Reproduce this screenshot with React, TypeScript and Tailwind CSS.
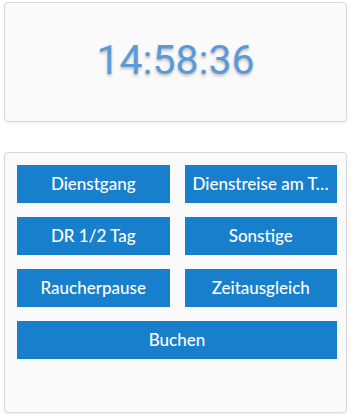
const actions = [
  'Dienstgang',
  'Dienstreise am Tag',
  'DR 1/2 Tag',
  'Sonstige',
  'Raucherpause',
  'Zeitausgleich',
]

function ActionButton({ label, wide }: { label: string; wide?: boolean }) {
  return (
    <button
      className={`h-[38px] min-w-0 bg-[#187fcc] px-[8px] text-[17px] font-medium text-white truncate ${wide ? 'col-span-2' : ''}`}
      style={{ fontFamily: 'Lato, "Open Sans", sans-serif' }}
    >
      {label}
    </button>
  )
}

export default function App() {
  return (
    <div className="w-[352px] h-[415px] bg-white pt-[2px] pl-[4px] pr-[5px]">
      {/* Uhr */}
      <div className="h-[120px] rounded-[4px] border border-[#d9d9d9] bg-[#fafafa] shadow-[0_1px_2px_rgba(0,0,0,0.08)] flex items-center justify-center">
        <span
          className="text-[41px] text-[#5b9bd5] [text-shadow:0_2px_3px_rgba(0,0,0,0.25)] pb-[2px]"
          style={{ fontFamily: 'Roboto, sans-serif' }}
        >
          14:58:36
        </span>
      </div>

      {/* Buchungen */}
      <div className="mt-[30px] h-[261px] rounded-[4px] border border-[#d9d9d9] bg-[#fafafa] shadow-[0_1px_2px_rgba(0,0,0,0.08)] pt-[12px] pl-[12px] pr-[9px]">
        <div className="grid grid-cols-2 gap-x-[15px] gap-y-[14px]">
          {actions.map((a) => (
            <ActionButton key={a} label={a} />
          ))}
          <ActionButton label="Buchen" wide />
        </div>
      </div>
    </div>
  )
}
